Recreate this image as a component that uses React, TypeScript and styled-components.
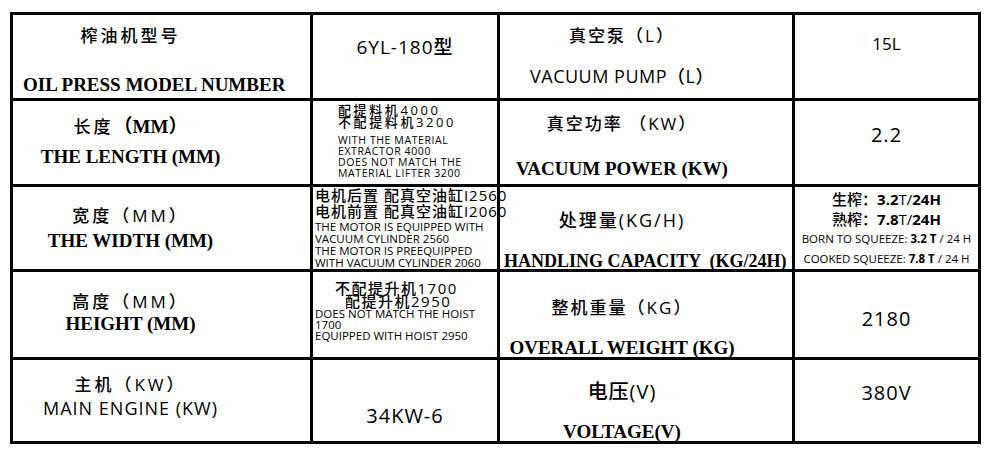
import React from 'react';
import styled, { createGlobalStyle } from 'styled-components';

const GlobalStyle = createGlobalStyle`
  html, body {
    margin: 0;
    padding: 0;
    background: #fff;
    color: #000;
  }
  body {
    width: 1000px;
    height: 459px;
    overflow: hidden;
  }
`;

const Sheet = styled.div`
  display: grid;
  grid-template-columns: 300px 187px 295px 186px;
  grid-template-rows: 86px 86px 85px 88px 84px;
  width: max-content;
  margin: 12px 0 0 10px;
  border-top: 3px solid #000;
  border-left: 3px solid #000;
`;

const Cell = styled.div<{ $pt?: number; $pl?: number; $pr?: number; $left?: boolean }>`
  box-sizing: border-box;
  min-width: 0;
  border-right: 3px solid #000;
  border-bottom: 3px solid #000;
  padding: ${(p) => p.$pt ?? 0}px ${(p) => p.$pr ?? 0}px 0 ${(p) => p.$pl ?? 0}px;
  text-align: ${(p) => (p.$left ? 'left' : 'center')};
`;

// first column + third column share the "label" look
const NameCell = styled(Cell).attrs({ $pl: 10, $pr: 72 })``;
const ParamCell = styled(Cell).attrs({ $pl: 4, $pr: 52 })``;

const CnLabel = styled.div<{ $size?: number; $ls?: number }>`
  font-family: 'Open Sans', 'Noto Sans CJK SC', sans-serif;
  font-weight: 500;
  font-size: ${(p) => p.$size ?? 17}px;
  line-height: 20px;
  letter-spacing: ${(p) => p.$ls ?? 3}px;
  white-space: nowrap;
`;

const SerifBit = styled.span`
  font-family: 'Liberation Serif', 'Noto Sans CJK SC', serif;
  font-weight: 700;
  font-size: 19px;
  letter-spacing: 0;
`;

const SerifLabel = styled.div<{ $gap: number; $size?: number }>`
  margin-top: ${(p) => p.$gap}px;
  font-family: 'Liberation Serif', 'Noto Sans CJK SC', serif;
  font-weight: 700;
  font-size: ${(p) => p.$size ?? 19}px;
  line-height: 22px;
  white-space: nowrap;
`;

const SansLabel = styled.div<{ $gap: number; $ls?: number }>`
  margin-top: ${(p) => p.$gap}px;
  font-family: 'Open Sans', 'Noto Sans CJK SC', sans-serif;
  font-weight: 500;
  font-size: 18px;
  line-height: 22px;
  letter-spacing: ${(p) => p.$ls ?? 1}px;
  white-space: nowrap;
`;

const Value = styled.div<{ $size?: number; $ls?: number }>`
  font-family: 'Open Sans', 'Noto Sans CJK SC', sans-serif;
  font-weight: 500;
  font-size: ${(p) => p.$size ?? 20}px;
  line-height: 22px;
  letter-spacing: ${(p) => p.$ls ?? 1}px;
  white-space: nowrap;
`;

const NoteCn = styled.div<{ $lh: number; $size?: number; $indent?: number; $ls?: number }>`
  font-family: 'Open Sans', 'Noto Sans CJK SC', sans-serif;
  font-weight: 500;
  font-size: ${(p) => p.$size ?? 15}px;
  line-height: ${(p) => p.$lh}px;
  padding-left: ${(p) => p.$indent ?? 0}px;
  letter-spacing: ${(p) => p.$ls ?? 1.5}px;
  white-space: nowrap;
`;

const NoteEn = styled.div<{ $lh: number; $size?: number; $gap?: number; $ls?: number }>`
  margin-top: ${(p) => p.$gap ?? 0}px;
  font-family: 'Open Sans', sans-serif;
  font-weight: 500;
  font-size: ${(p) => p.$size ?? 11.5}px;
  line-height: ${(p) => p.$lh}px;
  letter-spacing: ${(p) => p.$ls ?? 0}px;
  white-space: nowrap;
`;

const Strong = styled.span`
  font-weight: 700;
`;

const App: React.FC = () => {
  return (
    <>
      <GlobalStyle />
      <Sheet>
        {/* row 1 */}
        <NameCell $pt={11}>
          <CnLabel>榨油机型号</CnLabel>
          <SerifLabel $gap={28}>OIL PRESS MODEL NUMBER</SerifLabel>
        </NameCell>
        <Cell $pt={21}>
          <Value $size={19} $ls={1}>6YL-180型</Value>
        </Cell>
        <ParamCell $pt={11}>
          <CnLabel $ls={2}>真空泵（L）</CnLabel>
          <SansLabel $gap={19} $ls={0.5}>VACUUM PUMP（L）</SansLabel>
        </ParamCell>
        <Cell $pt={18}>
          <Value $size={17} $ls={0}>15L</Value>
        </Cell>

        {/* row 2 */}
        <NameCell $pt={16}>
          <CnLabel>长度<SerifBit>（MM）</SerifBit></CnLabel>
          <SerifLabel $gap={9}>THE LENGTH (MM)</SerifLabel>
        </NameCell>
        <Cell $left $pt={3} $pl={25}>
          <NoteCn $lh={12} $size={13} $ls={2.6}>配提料机4000</NoteCn>
          <NoteCn $lh={12} $size={13} $ls={2.6}>不配提料机3200</NoteCn>
          <NoteEn $lh={11} $size={10.5} $ls={0.6} $gap={7}>WITH THE MATERIAL</NoteEn>
          <NoteEn $lh={11} $size={10.5} $ls={0.6}>EXTRACTOR 4000</NoteEn>
          <NoteEn $lh={11} $size={10.5} $ls={0.6}>DOES NOT MATCH THE</NoteEn>
          <NoteEn $lh={11} $size={10.5} $ls={0.6}>MATERIAL LIFTER 3200</NoteEn>
        </Cell>
        <ParamCell $pt={13}>
          <CnLabel $ls={2}>真空功率 （KW）</CnLabel>
          <SerifLabel $gap={24}>VACUUM POWER (KW)</SerifLabel>
        </ParamCell>
        <Cell $pt={23}>
          <Value>2.2</Value>
        </Cell>

        {/* row 3 */}
        <NameCell $pt={19}>
          <CnLabel>宽度（MM）</CnLabel>
          <SerifLabel $gap={4}>THE WIDTH (MM)</SerifLabel>
        </NameCell>
        <Cell $left $pt={0} $pl={2}>
          <NoteCn $lh={16} $ls={1}>电机后置 配真空油缸I2560</NoteCn>
          <NoteCn $lh={16} $ls={1}>电机前置 配真空油缸I2060</NoteCn>
          <NoteEn $lh={12} $gap={2}>THE MOTOR IS EQUIPPED WITH</NoteEn>
          <NoteEn $lh={12}>VACUUM CYLINDER 2560</NoteEn>
          <NoteEn $lh={12}>THE MOTOR IS PREEQUIPPED</NoteEn>
          <NoteEn $lh={12}>WITH VACUUM CYLINDER 2060</NoteEn>
        </Cell>
        <ParamCell $pt={23}>
          <CnLabel $size={18} $ls={2}>处理量(KG/H)</CnLabel>
          <SerifLabel $gap={20} $size={18}>HANDLING CAPACITY &nbsp;(KG/24H)</SerifLabel>
        </ParamCell>
        <Cell $pt={2}>
          <NoteCn $lh={20} $ls={0}>生榨：<Strong>3.2</Strong>T/<Strong>24H</Strong></NoteCn>
          <NoteCn $lh={20} $ls={0}>熟榨：<Strong>7.8</Strong>T/<Strong>24H</Strong></NoteCn>
          <NoteEn $lh={20}>BORN TO SQUEEZE: <Strong>3.2 T</Strong> / 24 H</NoteEn>
          <NoteEn $lh={20}>COOKED SQUEEZE: <Strong>7.8 T</Strong> / 24 H</NoteEn>
        </Cell>

        {/* row 4 */}
        <NameCell $pt={20}>
          <CnLabel>高度（MM）</CnLabel>
          <SerifLabel $gap={1}>HEIGHT (MM)</SerifLabel>
        </NameCell>
        <Cell $left $pt={10} $pl={2}>
          <NoteCn $lh={13} $indent={20}>不配提升机1700</NoteCn>
          <NoteCn $lh={13} $indent={30}>配提升机2950</NoteCn>
          <NoteEn $lh={11}>DOES NOT MATCH THE HOIST</NoteEn>
          <NoteEn $lh={11}>1700</NoteEn>
          <NoteEn $lh={11}>EQUIPPED WITH HOIST 2950</NoteEn>
        </Cell>
        <ParamCell $pt={26}>
          <CnLabel $ls={2}>整机重量（KG）</CnLabel>
          <SerifLabel $gap={19}>OVERALL WEIGHT (KG)</SerifLabel>
        </ParamCell>
        <Cell $pt={36}>
          <Value>2180</Value>
        </Cell>

        {/* row 5 */}
        <NameCell $pt={15}>
          <CnLabel>主机（KW）</CnLabel>
          <SansLabel $gap={2}>MAIN ENGINE (KW)</SansLabel>
        </NameCell>
        <Cell $pt={45}>
          <Value>34KW-6</Value>
        </Cell>
        <ParamCell $pt={22}>
          <CnLabel $size={20} $ls={1}>电压(V)</CnLabel>
          <SerifLabel $gap={19}>VOLTAGE(V)</SerifLabel>
        </ParamCell>
        <Cell $pt={22}>
          <Value>380V</Value>
        </Cell>
      </Sheet>
    </>
  );
};

export default App;
